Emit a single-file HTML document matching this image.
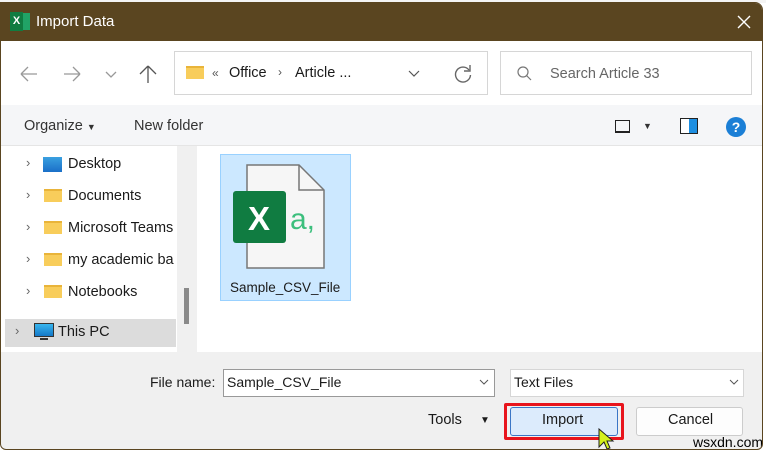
<!DOCTYPE html>
<html><head><meta charset="utf-8"><style>
*{box-sizing:border-box;margin:0;padding:0}
body{width:766px;height:451px;overflow:hidden;background:#fff;font-family:"Liberation Sans",sans-serif;position:relative;color:#1a1a1a}
.a{position:absolute}
.win{left:0;top:2px;width:763px;height:448px;border:1px solid #5a4520;border-radius:0 8px 6px 6px;background:#f0f0f0;overflow:hidden}
.title{left:0;top:0;width:763px;height:38px;background:#5a4520;color:#fff;font-size:15px}
.t{font-size:14.5px;white-space:nowrap}
.box{border:1px solid #d6d6d6;background:#fff}
.fold{width:18px;height:13px;background:#f8cd5b;border-top:2px solid #e9b43a}
.ch{color:#666;font-size:13px}
</style></head><body>
<div class="a" style="left:0;top:0;width:766px;height:3px;background:#f4f4f4"></div>
<div class="a win">
 <div class="a title">
  <div class="a" style="left:10px;top:10px;width:19px;height:17px;background:#21a366"></div>
  <div class="a" style="left:9px;top:9px;width:13px;height:19px;background:#107c41;color:#fff;font-size:11px;font-weight:bold;text-align:center;line-height:19px">X</div>
  <div class="a" style="left:35px;top:10px">Import Data</div>
  <svg class="a" style="left:736px;top:12px" width="14" height="14"><path d="M1 1L13 13M13 1L1 13" stroke="#fff" stroke-width="1.4"/></svg>
 </div>
 <div class="a" style="left:0;top:38px;width:763px;height:64px;background:#fff"></div>
 <svg class="a" style="left:18px;top:61px" width="140" height="20" fill="none" stroke-width="1.3">
  <path d="M2 10H18M2 10L9 3M2 10L9 17" stroke="#999"/>
  <path d="M45 10H61M61 10L54 3M61 10L54 17" stroke="#999"/>
  <path d="M87 8L92 13L97 8" stroke="#999"/>
  <path d="M129 2V19M129 2L121 10M129 2L137 10" stroke="#555"/>
 </svg>
 <div class="a box" style="left:173px;top:48px;width:314px;height:44px"></div>
 <div class="a fold" style="left:185px;top:63px"></div>
 <div class="a t" style="left:211px;top:63px;color:#555;font-size:12px">«</div>
 <div class="a t" style="left:228px;top:62px">Office</div>
 <div class="a t" style="left:277px;top:62px;color:#555;font-size:12px">›</div>
 <div class="a t" style="left:294px;top:62px">Article ...</div>
 <svg class="a" style="left:407px;top:67px" width="12" height="8"><path d="M1 1L6 6L11 1" fill="none" stroke="#555" stroke-width="1.2"/></svg>
 <svg class="a" style="left:452px;top:61px" width="20" height="20"><path d="M16 6A7.5 7.5 0 1 0 17.5 11" fill="none" stroke="#666" stroke-width="1.4"/><path d="M17 1V7H11" fill="none" stroke="#666" stroke-width="1.4"/></svg>
 <div class="a box" style="left:499px;top:48px;width:252px;height:44px"></div>
 <svg class="a" style="left:516px;top:63px" width="16" height="16"><circle cx="6" cy="6" r="5" fill="none" stroke="#777" stroke-width="1.2"/><line x1="9.5" y1="9.5" x2="14" y2="14" stroke="#777" stroke-width="1.2"/></svg>
 <div class="a t" style="left:549px;top:63px;color:#666">Search Article 33</div>
 <div class="a" style="left:0;top:102px;width:763px;height:41px;background:#f5f6f8;border-bottom:1px solid #e5e5e5"></div>
 <div class="a t" style="left:23px;top:115px;color:#333">Organize <span style="font-size:9px">▼</span></div>
 <div class="a t" style="left:133px;top:115px;color:#333">New folder</div>
 <div class="a" style="left:614px;top:117px;width:15px;height:13px;border:1px solid #222;border-bottom-width:2px"></div>
 <div class="a t" style="left:642px;top:118px;font-size:9px;color:#333">▼</div>
 <div class="a" style="left:679px;top:115px;width:18px;height:16px;border:1px solid #222;background:linear-gradient(90deg,#fff 50%,#1e8fe1 50%)"></div>
 <div class="a" style="left:725px;top:114px;width:20px;height:20px;border-radius:50%;background:#1b7fd6;color:#fff;font-size:14px;font-weight:bold;text-align:center;line-height:20px">?</div>
 <div class="a" style="left:0;top:143px;width:176px;height:206px;background:#fff"></div>
 <div class="a" style="left:176px;top:143px;width:19px;height:206px;background:#f0f0f0"></div>
 <div class="a" style="left:183px;top:285px;width:5px;height:36px;background:#8a8a8a"></div>
 <div class="a" style="left:196px;top:143px;width:567px;height:206px;background:#fff"></div>
 <div class="a" style="left:4px;top:316px;width:171px;height:28px;background:#dcdcdc"></div>
 <div class="a ch" style="left:25px;top:152px">›</div>
 <div class="a ch" style="left:25px;top:184px">›</div>
 <div class="a ch" style="left:25px;top:216px">›</div>
 <div class="a ch" style="left:25px;top:248px">›</div>
 <div class="a ch" style="left:25px;top:280px">›</div>
 <div class="a ch" style="left:14px;top:320px">›</div>
 <div class="a" style="left:42px;top:154px;width:19px;height:15px;background:linear-gradient(#3aa0e0,#1a6fc8)"></div>
 <div class="a fold" style="left:43px;top:186px"></div>
 <div class="a fold" style="left:43px;top:218px"></div>
 <div class="a fold" style="left:43px;top:250px"></div>
 <div class="a fold" style="left:43px;top:282px"></div>
 <div class="a" style="left:33px;top:320px;width:20px;height:14px;background:linear-gradient(#38b6ee,#1378c8);border:1px solid #333"></div>
 <div class="a" style="left:39px;top:335px;width:8px;height:2px;background:#333"></div>
 <div class="a t" style="left:67px;top:153px">Desktop</div>
 <div class="a t" style="left:67px;top:185px">Documents</div>
 <div class="a t" style="left:67px;top:217px;width:109px;overflow:hidden">Microsoft Teams</div>
 <div class="a t" style="left:67px;top:249px;width:109px;overflow:hidden">my academic ba</div>
 <div class="a t" style="left:67px;top:281px">Notebooks</div>
 <div class="a t" style="left:57px;top:321px">This PC</div>
 <div class="a" style="left:219px;top:151px;width:131px;height:147px;background:#cce8ff;border:1px solid #99d1ff"></div>
 <svg class="a" style="left:230px;top:161px" width="96" height="106"><path d="M16 1H68L93 26V104H16Z" fill="#f6f6f6" stroke="#777" stroke-width="1.5"/><path d="M68 1V26H93" fill="none" stroke="#777" stroke-width="1.5"/><rect x="2" y="27" width="53" height="52" rx="3" fill="#107c41"/><text x="28" y="66" font-family="Liberation Sans" font-weight="bold" font-size="33" fill="#fff" text-anchor="middle">X</text><text x="59" y="65" font-family="Liberation Sans" font-size="30" fill="#3cbf7d">a,</text></svg>
 <div class="a t" style="left:229px;top:277px;font-size:13.5px">Sample_CSV_File</div>
 <div class="a t" style="left:149px;top:371px;font-size:14px">File name:</div>
 <div class="a box" style="left:222px;top:366px;width:272px;height:28px;border-color:#999"></div>
 <div class="a t" style="left:226px;top:371px;font-size:14px">Sample_CSV_File</div>
 <svg class="a" style="left:478px;top:376px" width="10" height="6"><path d="M1 1L5 5L9 1" fill="none" stroke="#555"/></svg>
 <div class="a box" style="left:509px;top:366px;width:234px;height:28px"></div>
 <div class="a t" style="left:513px;top:371px;font-size:14px">Text Files</div>
 <svg class="a" style="left:728px;top:376px" width="10" height="6"><path d="M1 1L5 5L9 1" fill="none" stroke="#555"/></svg>
 <div class="a t" style="left:427px;top:409px">Tools</div>
 <div class="a t" style="left:479px;top:412px;font-size:10px">▼</div>
 <div class="a" style="left:503px;top:400px;width:120px;height:37px;border:3px solid #e8141c;border-radius:2px"></div>
 <div class="a" style="left:509px;top:404px;width:108px;height:29px;background:#dcebfc;border:1px solid #3b76c6;border-radius:3px"></div>
 <div class="a t" style="left:541px;top:409px">Import</div>
 <div class="a" style="left:635px;top:404px;width:107px;height:29px;background:#fdfdfd;border:1px solid #ccc;border-radius:3px"></div>
 <div class="a t" style="left:667px;top:409px">Cancel</div>
 <svg class="a" style="left:597px;top:425px" width="18" height="24"><path d="M1 1L1 19L6 14L9 21L12 20L9 13L15 13Z" fill="#d4f01c" stroke="#222" stroke-width="1"/></svg>
 <div class="a t" style="left:692px;top:431px;font-size:14px;color:#000">wsxdn.com</div>
</div>
</body></html>
